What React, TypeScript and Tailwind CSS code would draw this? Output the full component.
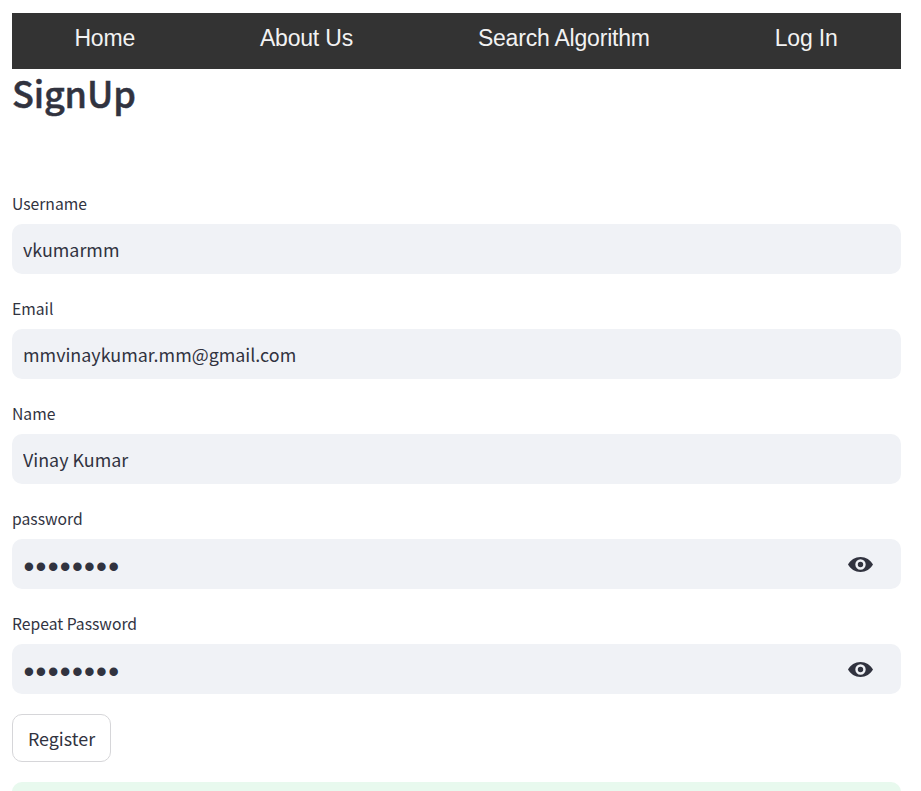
const sans = "font-['Noto_Sans_CJK_SC',sans-serif]";

function Eye() {
  return (
    <svg width="25" height="17" viewBox="0 0 25 17" className="mt-px" aria-hidden="true">
      <path
        fill="#31333f"
        fillRule="evenodd"
        d="M12.500 1C7.200 1 2.400 4 0 8.500 2.400 13 7.200 16 12.500 16S22.600 13 25 8.500C22.600 4 17.800 1 12.500 1Zm0 12.700a5.200 5.200 0 1 1 0-10.400 5.200 5.200 0 0 1 0 10.400Zm0-2.500a2.700 2.700 0 1 0 0-5.400 2.700 2.700 0 0 0 0 5.400Z"
      />
    </svg>
  );
}

interface FieldProps {
  label: string;
  value: string;
  secret?: boolean;
}

function Field({ label, value, secret }: FieldProps) {
  return (
    <label className="flex flex-col">
      <span className="h-[30px] text-[15.7px] leading-5">{label}</span>
      <span className="flex h-[50px] items-center rounded-[10px] bg-[#f0f2f6] pr-7 pl-[11px]">
        <input
          className={`h-[50px] min-w-0 flex-1 bg-transparent outline-none ${
            secret ? "pt-[5px] pl-[0.5px] font-['Liberation_Sans',sans-serif] text-[31px] tracking-[1.25px]" : "text-[17.9px]"
          }`}
          type={secret ? "password" : "text"}
          defaultValue={value}
        />
        {secret && <Eye />}
      </span>
    </label>
  );
}

export default function App() {
  return (
    <div className={`h-[791px] overflow-hidden bg-white pt-[13px] pr-5 pl-3 text-[#31333f] ${sans}`}>
      <nav className="flex h-14 justify-around bg-[#333] pt-[11px] pr-px font-['Liberation_Sans',Arial,sans-serif] text-[23px] leading-7 tracking-[-0.2px] text-[#f2f2f2]">
        <a>Home</a>
        <a>About Us</a>
        <a>Search Algorithm</a>
        <a>Log In</a>
      </nav>
      <h1 className="h-[125px] text-[36px] leading-[47px] font-medium tracking-[-0.15px] [-webkit-text-stroke:0.5px_#31333f]">SignUp</h1>
      <form className="flex flex-col gap-[25px]">
        <Field label="Username" value="vkumarmm" />
        <Field label="Email" value="mmvinaykumar.mm@gmail.com" />
        <Field label="Name" value="Vinay Kumar" />
        <Field label="password" value="password" secret />
        <Field label="Repeat Password" value="password" secret />
      </form>
      <button className="mt-5 flex h-12 w-[99px] items-center justify-center rounded-[10px] border border-[#d6d6d9] text-[17.9px]">
        Register
      </button>
      <div className="mt-5 h-20 rounded-[10px] bg-[#e8f9ee]" />
    </div>
  );
}
